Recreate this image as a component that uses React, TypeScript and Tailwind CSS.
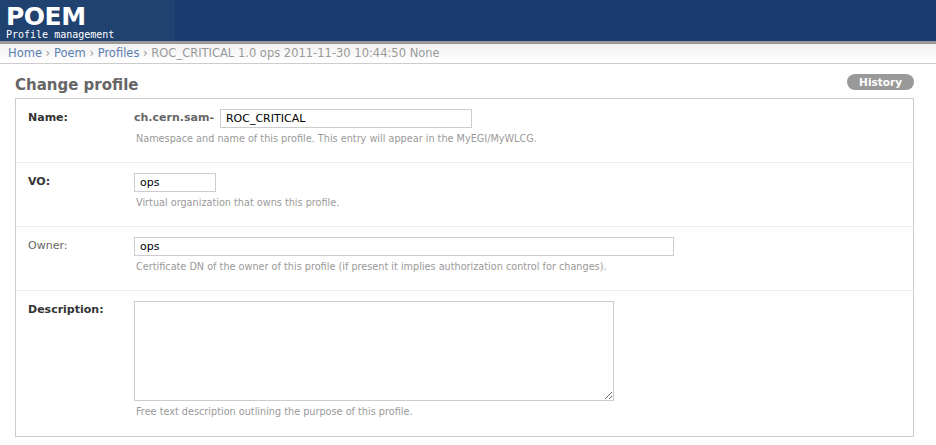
import React from "react";

const font = { fontFamily: '"DejaVu Sans", Verdana, sans-serif' };

function Row({
  label,
  bold,
  children,
  help,
  last,
}: {
  label: string;
  bold?: boolean;
  children: React.ReactNode;
  help: string;
  last?: boolean;
}) {
  return (
    <div
      className={`flex pt-[10px] pl-[12px] ${last ? "h-[145px]" : "h-[64px] border-b border-[#eee]"}`}
    >
      <div
        className={`w-[106px] text-[11px] leading-[18px] ${bold ? "font-bold text-[#333]" : "text-[#666]"}`}
      >
        {label}
      </div>
      <div className="flex flex-col">
        {children}
        <p className="mt-[5px] pl-[2px] text-[9.7px] leading-[12px] text-[#999]">{help}</p>
      </div>
    </div>
  );
}

export default function App() {
  return (
    <div className="min-h-[445px] bg-white" style={font}>
      {/* HEADER */}
      <div className="flex h-[41px] bg-[#1a3b6d]">
        <div className="w-[175px] bg-[#1f4271] pl-[6px] text-white">
          <div className="pt-[4px] text-[25px] font-bold leading-[25px] tracking-[-0.5px]">POEM</div>
          <div
            className="text-[10px] leading-[11px]"
            style={{ fontFamily: '"DejaVu Sans Mono", monospace' }}
          >
            Profile management
          </div>
        </div>
      </div>
      <div className="h-[3px] bg-[#999]" />

      {/* BREADCRUMBS */}
      <div className="h-[20px] border-b border-[#ccc] bg-gradient-to-b from-[#f2f2f2] to-white px-[8px] text-[11.5px] leading-[19px] text-[#999]">
        <a className="text-[#5b80b2]">Home</a> ›{" "}
        <a className="text-[#5b80b2]">Poem</a> ›{" "}
        <a className="text-[#5b80b2]">Profiles</a> › ROC_CRITICAL 1.0 ops 2011-11-30 10:44:50 None
      </div>

      {/* CONTENT */}
      <div className="pl-[15px] pr-[22px]">
        <div className="flex h-[34px] items-center justify-between pt-[8px]">
          <h1 className="text-[15px] font-bold text-[#666]">Change profile</h1>
          <span className="mb-[6px] rounded-full bg-[#999] px-[12px] text-[10.5px] font-bold leading-[16px] text-white">
            History
          </span>
        </div>

        <div className="border border-[#ccc]">
          <Row label="Name:" bold help="Namespace and name of this profile. This entry will appear in the MyEGI/MyWLCG.">
            <div className="flex items-center">
              <span className="mr-[6px] text-[11px] font-bold text-[#666]">ch.cern.sam-</span>
              <input
                defaultValue="ROC_CRITICAL"
                className="h-[19px] w-[252px] border border-[#ccc] px-[5px] text-[11px] text-black outline-none"
              />
            </div>
          </Row>
          <Row label="VO:" bold help="Virtual organization that owns this profile.">
            <input
              defaultValue="ops"
              className="h-[19px] w-[82px] border border-[#ccc] px-[5px] text-[11px] text-black outline-none"
            />
          </Row>
          <Row
            label="Owner:"
            help="Certificate DN of the owner of this profile (if present it implies authorization control for changes)."
          >
            <input
              defaultValue="ops"
              className="h-[19px] w-[540px] border border-[#ccc] px-[5px] text-[11px] text-black outline-none"
            />
          </Row>
          <Row label="Description:" bold last help="Free text description outlining the purpose of this profile.">
            <textarea className="h-[100px] w-[480px] border border-[#ccc] outline-none" />
          </Row>
        </div>
      </div>
    </div>
  );
}
